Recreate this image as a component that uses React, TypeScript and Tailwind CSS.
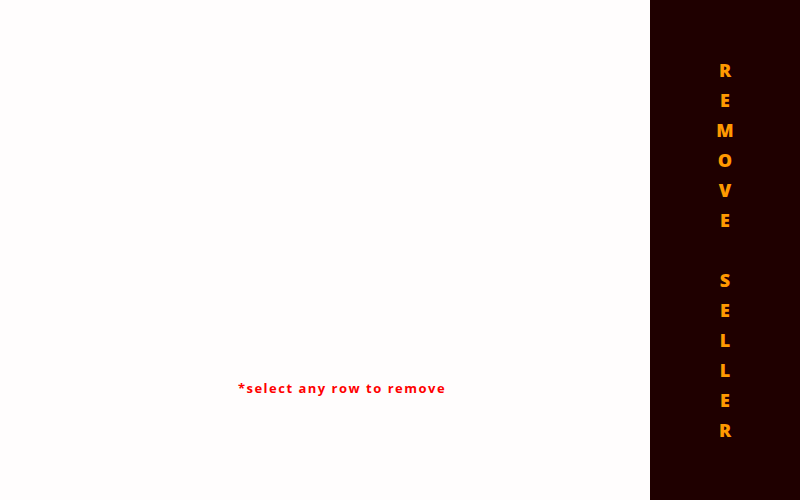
import React from 'react'

const LABEL = 'REMOVE SELLER'

export default function App() {
  return (
    <div className="flex h-[500px] w-[800px] bg-[#fffdfd] font-['Open_Sans',sans-serif]">
      {/* Main area */}
      <div className="flex flex-1 flex-col items-center">
        <div className="h-[379px]" />
        <p className="ml-[34px] text-[13px] font-bold tracking-[1.5px] text-[#ff0000]">
          *select any row to remove
        </p>
      </div>

      {/* Side action bar */}
      <div className="flex w-[150px] flex-col items-center bg-[#1f0000] pt-[55px]">
        {LABEL.split('').map((ch, i) => (
          <div
            key={i}
            className="flex h-[30px] items-center justify-center text-[18px] font-extrabold leading-[30px] text-[#ff9900]"
          >
            {ch === ' ' ? '\u00a0' : ch}
          </div>
        ))}
      </div>
    </div>
  )
}
